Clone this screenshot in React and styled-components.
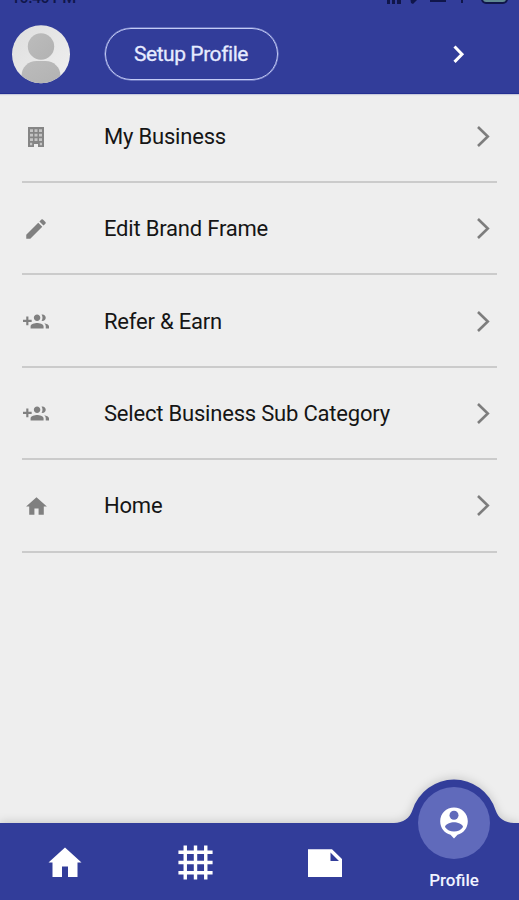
import React from "react";
import styled, { createGlobalStyle } from "styled-components";
import { MdEdit, MdHome, MdGrid4X4 } from "react-icons/md";

const GlobalStyle = createGlobalStyle`
  * {
    box-sizing: border-box;
  }
  body {
    margin: 0;
    font-family: Roboto, "Liberation Sans", sans-serif;
  }
`;

const Screen = styled.div`
  width: 519px;
  height: 900px;
  display: flex;
  flex-direction: column;
  overflow: hidden;
  background: #eeeeee;
`;

const Header = styled.header`
  height: 94px;
  flex: none;
  background: #323d9a;
  border-bottom: 1px solid #242f92;
  box-shadow: 0 1px 1px #c9cbdc;
`;

const StatusBar = styled.div`
  height: 15px;
  margin-top: -11px;
  padding: 0 7px 0 11px;
  display: flex;
  align-items: flex-end;
  justify-content: space-between;
  color: #10164a;
`;

const Clock = styled.span`
  margin-bottom: -2px;
  font-size: 16px;
  line-height: 16px;
  font-weight: 500;
  letter-spacing: -0.5px;
`;

const ProfileRow = styled.div`
  height: 89px;
  padding: 21px 49px 0 12px;
  display: flex;
  align-items: flex-start;
`;

const SetupButton = styled.button`
  width: 173px;
  height: 52px;
  margin: 3px auto 0 33.5px;
  padding: 0;
  border: 1.5px solid #c3cbf5;
  border-radius: 27px;
  background: transparent;
  color: #e6ebff;
  font-family: inherit;
  font-size: 21px;
  letter-spacing: -0.45px;
  box-shadow: 0 0 0 0.5px #9aa4e0;
  -webkit-text-stroke: 0.3px #e6ebff;
`;

const HeaderArrow = styled.svg`
  width: 24px;
  height: 24px;
  margin-top: 17px;
`;

const Menu = styled.ul`
  flex: 1;
  margin: 0;
  padding: 0 22px;
  list-style: none;
`;

const MenuItem = styled.li`
  height: ${({ $first }) => ($first ? "89px" : "92.4px")};
  padding-top: ${({ $first }) => ($first ? "0" : "2px")};
  padding-bottom: ${({ $first }) => ($first ? "2px" : "0")};
  display: flex;
  align-items: center;
  border-bottom: 2px solid #cbcbcb;
`;

const IconSlot = styled.span`
  width: 28px;
  margin-right: 54px;
  display: flex;
  justify-content: center;
  color: #808080;
`;

const Label = styled.span`
  flex: 1;
  font-size: 22px;
  line-height: 28px;
  letter-spacing: -0.2px;
  color: #151515;
`;

const Chevron = styled.svg`
  width: 24px;
  height: 24px;
  margin-right: 2px;
`;

const BottomNav = styled.nav`
  position: relative;
  height: 77px;
  flex: none;
  display: grid;
  grid-template-columns: 130px 130px 129px 130px;
  color: #fff;
`;

const NavShape = styled.svg`
  position: absolute;
  left: 0;
  bottom: 0;
  filter: drop-shadow(0 -1px 5px rgba(0, 0, 0, 0.16));
`;

const NavItem = styled.a`
  position: relative;
  display: flex;
  flex-direction: column;
  align-items: center;
  padding-top: ${({ $active }) => ($active ? "0" : "19px")};
`;

const ActiveDisc = styled.span`
  width: 72px;
  height: 72px;
  flex: none;
  margin-top: -36px;
  display: flex;
  align-items: center;
  justify-content: center;
  border-radius: 50%;
  background: #606abb;
`;

const NavLabel = styled.span`
  margin-top: 11px;
  font-size: 17px;
  line-height: 20px;
  font-weight: 500;
  color: #f1f3ff;
`;

function StatusIcons() {
  return (
    <svg width="126" height="15" viewBox="0 0 126 15" fill="#10164a">
      <path d="M1 9h3v6H1zM6 6h3v9H6zM11 3h4v12h-4z" />
      <path d="M24 8l8 2-5 5-2-1z" />
      <path d="M44 10h16v3H44z" />
      <path d="M75 6h2v8h-2z" />
      <rect x="96" y="1" width="25" height="13" rx="4" fill="#5f8992" stroke="#10164a" strokeWidth="2" />
    </svg>
  );
}

function Avatar() {
  return (
    <svg width="59" height="59" viewBox="0 0 59 59">
      <defs>
        <clipPath id="avatar-clip">
          <circle cx="29" cy="29.3" r="29" />
        </clipPath>
        <linearGradient id="avatar-bg" x1="0" y1="0" x2="1" y2="1">
          <stop offset="0" stopColor="#dedede" />
          <stop offset="1" stopColor="#f0f0f0" />
        </linearGradient>
        <linearGradient id="avatar-fg" x1="0" y1="0" x2="1" y2="1">
          <stop offset="0" stopColor="#bcbcbc" />
          <stop offset="1" stopColor="#b2b2b2" />
        </linearGradient>
      </defs>
      <g clipPath="url(#avatar-clip)">
        <rect width="59" height="59" fill="url(#avatar-bg)" />
        <circle cx="29" cy="21.5" r="13.2" fill="url(#avatar-fg)" />
        <path d="M9.500 59v-8c0-9 7-15 15-15h9c8 0 15 6 15 15v8z" fill="url(#avatar-fg)" />
      </g>
    </svg>
  );
}

function BuildingIcon() {
  return (
    <svg width="18" height="20" viewBox="0 0 18 20">
      <path d="M1 0h16v20h-6v-3H7v3H1z" fill="#858585" />
      <path
        d="M3 2.300h3v2.700H3zM7.500 2.300h3v2.700h-3zM12 2.300h3v2.700h-3zM3 6.800h3v2.700H3zM7.500 6.800h3v2.700h-3zM12 6.800h3v2.700h-3zM3 11.300h3V14H3zM7.500 11.300h3V14h-3zM12 11.300h3V14h-3zM3 15.800h2.200v2.400H3zM12.800 15.800H15v2.400h-2.200z"
        fill="#c4c4c4"
      />
    </svg>
  );
}

function GroupAddIcon() {
  return (
    <svg width="26" height="26" viewBox="0 0 24 24" fill="currentColor">
      <path d="M8 10H5V7H3v3H0v2h3v3h2v-3h3v-2zm10 1c1.660 0 2.990-1.340 2.990-3S19.660 5 18 5c-.32 0-.63.05-.91.14.57.81.9 1.790.9 2.860s-.34 2.040-.9 2.860c.28.09.59.14.91.14zm-5 0c1.660 0 2.990-1.340 2.990-3S14.660 5 13 5c-1.660 0-3 1.340-3 3s1.340 3 3 3zm6.620 2.160c.83.73 1.380 1.660 1.380 2.840v2h3v-2c0-1.540-2.370-2.490-4.380-2.840zM13 13c-2 0-6 1-6 3v2h12v-2c0-2-4-3-6-3z" />
    </svg>
  );
}

function HomeTabIcon() {
  return (
    <svg width="34" height="40" viewBox="0 0 34 40" fill="#fff">
      <path d="M17 5.500L33.500 20.500H29.500V35H20V24.500H14V35H4.500V20.500H.5z" />
    </svg>
  );
}

function NoteIcon() {
  return (
    <svg width="36" height="40" viewBox="0 0 36 40" fill="#fff">
      <path fillRule="evenodd" d="M1 7.300H25L35 17V35H1zM23.500 10.500V19H32z" />
    </svg>
  );
}

function PersonPinIcon() {
  return (
    <svg width="30" height="34" viewBox="0 0 30 34">
      <path d="M15 1.500C7.300 1.500 1.200 7.500 1.200 15.200c0 6.800 4.500 12.200 10.300 13.500L15 32.500l3.500-3.800C24.300 27.400 28.800 22 28.800 15.200 28.800 7.500 22.700 1.500 15 1.500z" fill="#fff" />
      <circle cx="15" cy="9.300" r="4.500" fill="#606abb" />
      <path d="M6 21c0-3 6-4.700 9-4.700s9 1.700 9 4.700c-2 3-5.300 4.500-9 4.500s-7-1.500-9-4.500z" fill="#606abb" />
    </svg>
  );
}

const items = [
  { label: "My Business", icon: <BuildingIcon /> },
  { label: "Edit Brand Frame", icon: <MdEdit size={26} /> },
  { label: "Refer & Earn", icon: <GroupAddIcon /> },
  { label: "Select Business Sub Category", icon: <GroupAddIcon /> },
  { label: "Home", icon: <MdHome size={25} /> },
];

function App() {
  return (
    <Screen>
      <GlobalStyle />
      <Header>
        <StatusBar>
          <Clock>10:40 PM</Clock>
          <StatusIcons />
        </StatusBar>
        <ProfileRow>
          <Avatar />
          <SetupButton>Setup Profile</SetupButton>
          <HeaderArrow viewBox="0 0 24 24" fill="none" stroke="#fff" strokeWidth="3">
            <path d="M8.500 4.500l7.500 7.700-7.500 7.700" />
          </HeaderArrow>
        </ProfileRow>
      </Header>

      <Menu>
        {items.map((item, i) => (
          <MenuItem key={item.label} $first={i === 0}>
            <IconSlot>{item.icon}</IconSlot>
            <Label>{item.label}</Label>
            <Chevron viewBox="0 0 24 24" fill="none" stroke="#7d7d7d" strokeWidth="2.6">
              <path d="M7 2l9.800 9.500L7 21" />
            </Chevron>
          </MenuItem>
        ))}
      </Menu>

      <BottomNav>
        <NavShape width="519" height="121" viewBox="0 0 519 121" fill="#323d9a">
          <path d="M0 44H394C403 44 410 39 412.500 31A43.500 43.500 0 0 1 495.500 31C498 39 505 44 514 44H519V121H0z" />
        </NavShape>
        <NavItem>
          <HomeTabIcon />
        </NavItem>
        <NavItem>
          <MdGrid4X4 size={41} />
        </NavItem>
        <NavItem>
          <NoteIcon />
        </NavItem>
        <NavItem $active>
          <ActiveDisc>
            <PersonPinIcon />
          </ActiveDisc>
          <NavLabel>Profile</NavLabel>
        </NavItem>
      </BottomNav>
    </Screen>
  );
}

export default App;
